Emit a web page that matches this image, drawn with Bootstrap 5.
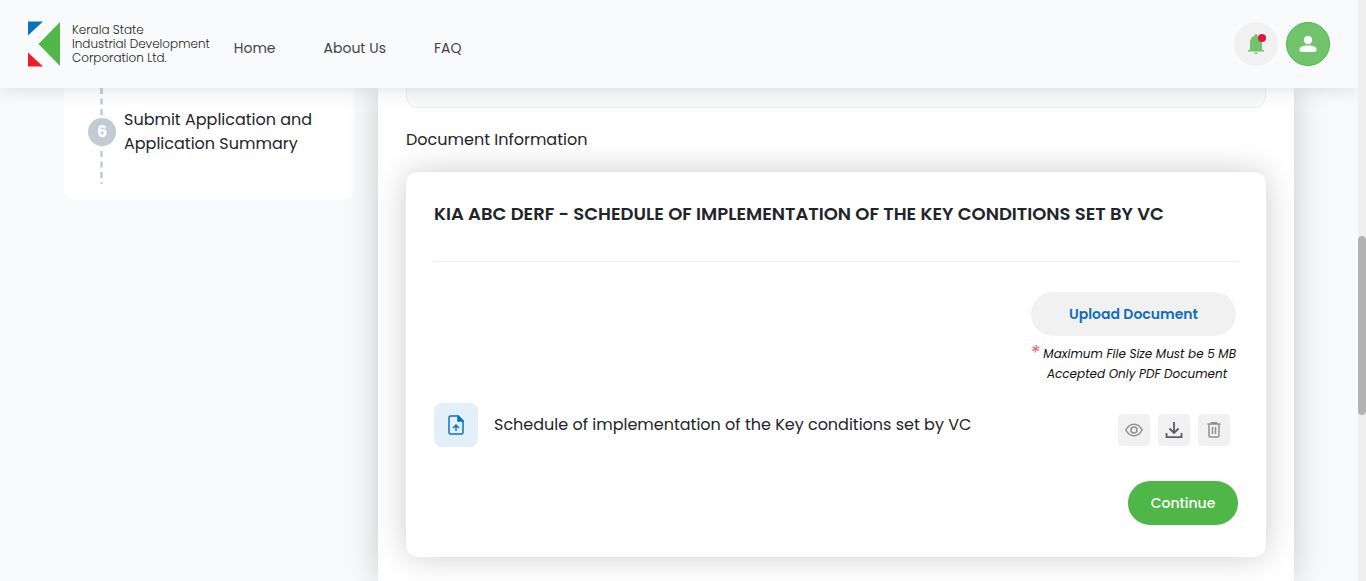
<!DOCTYPE html>
<html lang="en">
<head>
<meta charset="utf-8">
<meta name="viewport" content="width=device-width, initial-scale=1">
<title>Kerala State Industrial Development Corporation Ltd.</title>
<link href="https://cdn.jsdelivr.net/npm/bootstrap@5.3.0/dist/css/bootstrap.min.css" rel="stylesheet">
<style>
  body { font-family: Poppins, Inter, sans-serif; font-size: 16px; line-height: 24px; color: #212529; background: #f9fafc; }
  .topbar { height: 88px; background: #f9fafc; box-shadow: 0 0 20px rgba(0,0,0,.14); z-index: 10; padding: 0 28px; }
  .brand-name { font-size: 12px; line-height: 14px; font-weight: 300; color: #231f20; }
  .topbar .nav-link { font-size: 14px; line-height: 20px; color: #444; }
  .main-nav { gap: 48px; padding-top: 8px; }
  .round-btn { width: 44px; height: 44px; background: #f1f1f1; }
  .round-btn.user { background: #71c46c; border: 1px solid #4eb748; }
  .page-cols { padding: 0 64px; gap: 24px; }
  .side { width: 290px; }
  .steps { background: #fff; height: 112px; border-radius: 0 0 12px 12px; padding: 0 24px; gap: 8px; }
  .rail { width: 28px; height: 96px; }
  .step-text { padding-top: 20px; }
  .panel { background: #fff; padding: 0 28px; box-shadow: 0 0 32px rgba(0,0,0,.2); }
  .prev-box { height: 20px; background: #f8f9fb; border: 1px solid #ebedef; border-top: 0; border-radius: 0 0 12px 12px; }
  .section-label { padding: 20px 0; }
  .doc-card { border-radius: 12px; background: #fff; padding: 28px 28px 32px; box-shadow: 0 0 32px rgba(0,0,0,.2); }
  .doc-title { font-size: 18px; line-height: 28px; font-weight: 600; margin: 0; }
  .rule { margin: 33px 0 30px; color: #ddd; opacity: .5; }
  .upload { width: 205px; margin-right: 2px; }
  .pill { height: 44px; border-radius: 22px; font-size: 14px; font-weight: 500; padding: 0; }
  .pill-grey, .pill-grey:hover { background: #f1f1f1; color: #106eb8; font-weight: 600; }
  .pill-green, .pill-green:hover { background: #4eb748; color: #fff; width: 110px; }
  .hint { font-size: 12px; line-height: 20px; font-style: italic; margin: 8px 2px 19px 0; color: #111; }
  .hint sup { color: #f4656a; font-size: 20px; line-height: 0; top: -2px; vertical-align: middle; }
  .hint-line { padding-left: 8px; }
  .file-tile { width: 44px; height: 44px; border-radius: 8px; background: #e4f0f9; }
  .tools { gap: 8px; margin-right: 8px; padding-top: 10px; }
  .tool { width: 32px; height: 32px; border-radius: 4px; background: #f1f1f1; }
  .continue-row { margin-top: 34px; }
  .scroll-track { width: 8px; background: #efefef; }
  .scroll-before { flex: 236 0 0; }
  .scroll-thumb { flex: 179 0 0; border-radius: 4px; background: #b3b3b3; }
  .scroll-after { flex: 166 0 0; }
</style>
</head>
<body>
<div class="d-flex vh-100 overflow-hidden">
  <div class="flex-grow-1 d-flex flex-column overflow-hidden">
    <header class="topbar d-flex align-items-center flex-shrink-0 position-relative">
      <a href="#" class="d-flex align-items-center gap-2 text-decoration-none">
        <svg width="36" height="46" viewBox="0 0 36 46" aria-hidden="true"><path d="M0 .5h15L0 14.500z" fill="#0a73bd"/><path d="M0 31.500v14h15z" fill="#ec1f27"/><path d="M32 1v44L10.500 23z" fill="#4eb748"/></svg>
        <span class="brand-name">Kerala State<br>Industrial Development<br>Corporation Ltd.</span>
      </a>
      <nav class="main-nav d-flex ms-4">
        <a class="nav-link" href="#">Home</a>
        <a class="nav-link" href="#">About Us</a>
        <a class="nav-link" href="#">FAQ</a>
      </nav>
      <div class="ms-auto d-flex gap-2">
        <button type="button" class="round-btn btn rounded-circle p-0 border-0 d-flex align-items-center justify-content-center" aria-label="Notifications">
          <svg width="20" height="22" viewBox="0 0 20 22"><path d="M10 1q1.600 0 1.600 2c3 .7 4.400 3 4.400 6v8h2v1.500H2V17h2V9c0-3 1.400-5.300 4.400-6Q8.400 1 10 1zM8 19.500h4q-.5 1.500-2 1.500t-2-1.500z" fill="#71c46c"/><circle cx="16" cy="5" r="4" fill="#e0143c"/></svg>
        </button>
        <button type="button" class="round-btn user btn rounded-circle p-0 d-flex align-items-center justify-content-center" aria-label="Account">
          <svg width="18" height="18" viewBox="0 0 18 18" fill="#fff"><circle cx="9" cy="5" r="4.200"/><path d="M.5 14.500C.5 11.500 4 10.500 9 10.500s8.500 1 8.500 4c0 1.500-.5 2.500-2 2.500h-13c-1.500 0-2-1-2-2.500z"/></svg>
        </button>
      </div>
    </header>
    <div class="page-cols d-flex flex-grow-1">
      <aside class="side flex-shrink-0">
        <div class="steps d-flex">
          <svg class="rail flex-shrink-0" viewBox="0 0 28 96" aria-hidden="true"><path d="M13.500 0v96" stroke="#c0cbd4" stroke-width="2.500" stroke-dasharray="6 4.500"/><circle cx="14" cy="44" r="14" fill="#c0cbd4"/><text x="14" y="49" text-anchor="middle" font-size="16" font-weight="700" fill="#fff">6</text></svg>
          <div class="step-text">Submit Application and Application Summary</div>
        </div>
      </aside>
      <main class="panel flex-grow-1">
        <div class="prev-box"></div>
        <div class="section-label">Document Information</div>
        <section class="doc-card">
          <h2 class="doc-title">KIA ABC DERF - SCHEDULE OF IMPLEMENTATION OF THE KEY CONDITIONS SET BY VC</h2>
          <hr class="rule">
          <div class="upload ms-auto text-center">
            <button type="button" class="btn pill pill-grey border-0 w-100">Upload Document</button>
          </div>
          <div class="d-flex justify-content-end">
            <p class="hint text-center"><sup>*</sup> Maximum File Size Must be 5 MB<br><span class="hint-line">Accepted Only PDF Document</span></p>
          </div>
          <div class="d-flex align-items-center">
            <span class="file-tile d-flex align-items-center justify-content-center">
              <svg width="16" height="20" viewBox="0 0 16 20" fill="none" stroke="#0a73bd" stroke-width="1.500"><path d="M10 1H2.500Q1 1 1 2.500v15Q1 19 2.500 19h11q1.500 0 1.500-1.500V6z"/><path d="M10 1v5h5z" fill="#0a73bd"/><path d="M8 16v-5M5 13l3-3 3 3"/></svg>
            </span>
            <span class="ms-3">Schedule of implementation of the Key conditions set by VC</span>
            <div class="tools ms-auto d-flex">
              <button type="button" class="tool btn border-0 p-0 d-flex align-items-center justify-content-center" aria-label="View"><svg width="18" height="14" viewBox="0 0 18 14" fill="none" stroke="#909090" stroke-width="1.500"><path d="M.8 7C3 3 5.800 1.200 9 1.200S15 3 17.200 7C15 11 12.200 12.800 9 12.800S3 11 .8 7z"/><circle cx="9" cy="7" r="3"/></svg></button>
              <button type="button" class="tool btn border-0 p-0 d-flex align-items-center justify-content-center" aria-label="Download"><svg width="18" height="18" viewBox="0 0 18 18" fill="none" stroke="#5a5d63" stroke-width="1.800"><path d="M9 1v10.500M4.500 7.500L9 12l4.500-4.500M1.500 12v4.200h15V12"/></svg></button>
              <button type="button" class="tool btn border-0 p-0 d-flex align-items-center justify-content-center" aria-label="Delete"><svg width="14" height="16" viewBox="0 0 14 16" fill="none" stroke="#909090" stroke-width="1.500"><path d="M.5 2h13M4.500 1.500V.8h5v.7M2 2v11.500Q2 15 3.500 15h7q1.500 0 1.500-1.500V2M5.500 5v7M8.500 5v7"/></svg></button>
            </div>
          </div>
          <div class="d-flex justify-content-end continue-row">
            <button type="button" class="btn pill pill-green border-0">Continue</button>
          </div>
        </section>
      </main>
    </div>
  </div>
  <div class="scroll-track d-flex flex-column flex-shrink-0"><div class="scroll-before"></div><div class="scroll-thumb"></div><div class="scroll-after"></div></div>
</div>
<script src="https://cdn.jsdelivr.net/npm/bootstrap@5.3.0/dist/js/bootstrap.bundle.min.js"></script>
</body>
</html>
